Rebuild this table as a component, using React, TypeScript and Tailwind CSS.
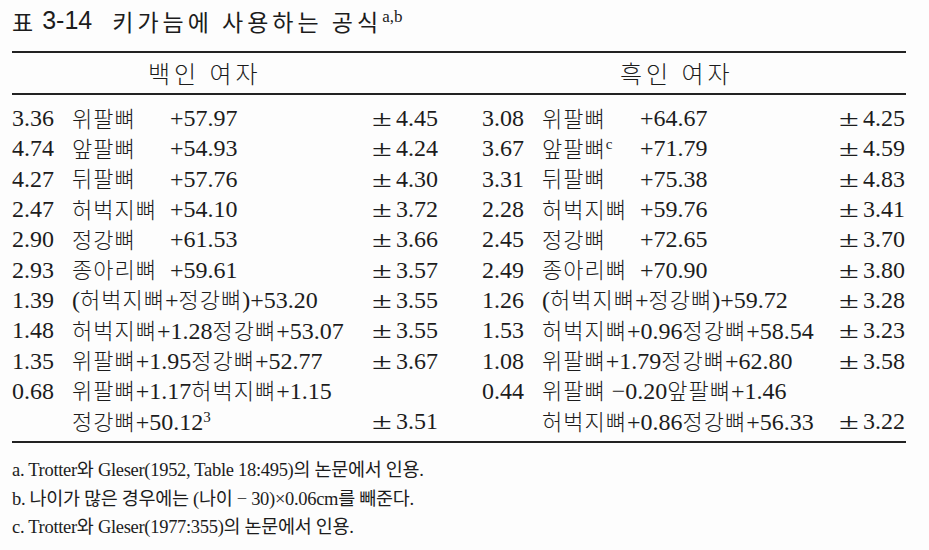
type Row = {
  coef: string;
  name?: string;
  value?: string;
  formula?: string;
  sup?: string;
  sd?: string;
};

const white: Row[] = [
  { coef: "3.36", name: "위팔뼈", value: "+57.97", sd: "4.45" },
  { coef: "4.74", name: "앞팔뼈", value: "+54.93", sd: "4.24" },
  { coef: "4.27", name: "뒤팔뼈", value: "+57.76", sd: "4.30" },
  { coef: "2.47", name: "허벅지뼈", value: "+54.10", sd: "3.72" },
  { coef: "2.90", name: "정강뼈", value: "+61.53", sd: "3.66" },
  { coef: "2.93", name: "종아리뼈", value: "+59.61", sd: "3.57" },
  { coef: "1.39", formula: "(허벅지뼈+정강뼈)+53.20", sd: "3.55" },
  { coef: "1.48", formula: "허벅지뼈+1.28정강뼈+53.07", sd: "3.55" },
  { coef: "1.35", formula: "위팔뼈+1.95정강뼈+52.77", sd: "3.67" },
  { coef: "0.68", formula: "위팔뼈+1.17허벅지뼈+1.15" },
  { coef: "", formula: "정강뼈+50.12", sup: "3", sd: "3.51" },
];

const black: Row[] = [
  { coef: "3.08", name: "위팔뼈", value: "+64.67", sd: "4.25" },
  { coef: "3.67", name: "앞팔뼈", sup: "c", value: "+71.79", sd: "4.59" },
  { coef: "3.31", name: "뒤팔뼈", value: "+75.38", sd: "4.83" },
  { coef: "2.28", name: "허벅지뼈", value: "+59.76", sd: "3.41" },
  { coef: "2.45", name: "정강뼈", value: "+72.65", sd: "3.70" },
  { coef: "2.49", name: "종아리뼈", value: "+70.90", sd: "3.80" },
  { coef: "1.26", formula: "(허벅지뼈+정강뼈)+59.72", sd: "3.28" },
  { coef: "1.53", formula: "허벅지뼈+0.96정강뼈+58.54", sd: "3.23" },
  { coef: "1.08", formula: "위팔뼈+1.79정강뼈+62.80", sd: "3.58" },
  { coef: "0.44", formula: "위팔뼈 −0.20앞팔뼈+1.46" },
  { coef: "", formula: "허벅지뼈+0.86정강뼈+56.33", sd: "3.22" },
];

// hangul runs get the gothic face, the rest stays in the serif
function Mixed({ text }: { text: string }) {
  return (
    <>
      {text.split(/([가-힣]+)/).map((part, i) =>
        /[가-힣]/.test(part) ? (
          <span key={i} className="text-[22px] tracking-[1px] font-light font-['Noto_Sans_CJK_KR',sans-serif]">
            {part}
          </span>
        ) : (
          <span key={i}>{part}</span>
        )
      )}
    </>
  );
}

function Sup({ children }: { children: string }) {
  return <span className="relative -top-[8px] text-[15px] leading-none">{children}</span>;
}

function Half({ rows, mid }: { rows: Row[]; mid: string }) {
  return (
    <div className="flex flex-col">
      {rows.map((r, i) => (
        <div key={i} className="flex h-[30.3px] items-center whitespace-nowrap">
          <span className="w-[60px] shrink-0">{r.coef}</span>
          <span className={`${mid} shrink-0 flex items-center`}>
            {r.formula ? (
              <span>
                <Mixed text={r.formula} />
                {r.sup && <Sup>{r.sup}</Sup>}
              </span>
            ) : (
              <>
                <span className="w-[98px] shrink-0">
                  <Mixed text={r.name ?? ""} />
                  {r.sup && <Sup>{r.sup}</Sup>}
                </span>
                <span>{r.value}</span>
              </>
            )}
          </span>
          {r.sd && (
            <span className="flex items-center">
              <span className="inline-block w-[24px]">
                <span className="inline-block origin-left scale-x-150">±</span>
              </span>
              <span>{r.sd}</span>
            </span>
          )}
        </div>
      ))}
    </div>
  );
}

export default function App() {
  return (
    <div className="w-[929px] h-[550px] bg-[#fdfdfd] text-[#1c1c1c] px-[12px] pt-[6px] font-['Liberation_Serif','Noto_Sans_CJK_KR',serif]">
      <div className="h-[30px] flex items-center text-[23px] whitespace-nowrap">
        <span className="font-['Noto_Sans_CJK_KR',sans-serif]">표</span>
        <span className="ml-[9px] text-[25px] font-['Liberation_Sans',sans-serif]">3-14</span>
        <span className="ml-[20px] tracking-[4px] font-['Noto_Sans_CJK_KR',sans-serif]">키가늠에 사용하는 공식</span>
        <span className="relative -top-[4px] text-[17px] font-['Liberation_Serif',serif]">a,b</span>
      </div>

      <div className="w-[894px] mt-[15px] border-t-2 border-[#222]">
        <div className="grid grid-cols-[470px_424px] h-[40px] items-center text-[24px] font-light font-['Noto_Sans_CJK_KR',sans-serif] tracking-[4px]">
          <span className="pl-[136px]">백인 여자</span>
          <span className="pl-[138px]">흑인 여자</span>
        </div>
        <div className="border-t-2 border-[#222]" />
        <div className="grid grid-cols-[470px_424px] pt-[8px] pb-[5px] text-[24px] leading-none">
          <Half rows={white} mid="w-[300px]" />
          <Half rows={black} mid="w-[297px]" />
        </div>
        <div className="border-t-2 border-[#222]" />
      </div>

      <div className="pt-[13px] text-[18.5px] leading-[28.5px] tracking-[-0.3px]">
        <p>a. Trotter와 Gleser(1952, Table 18:495)의 논문에서 인용.</p>
        <p>b. 나이가 많은 경우에는 (나이 − 30)×0.06cm를 빼준다.</p>
        <p>c. Trotter와 Gleser(1977:355)의 논문에서 인용.</p>
      </div>
    </div>
  );
}
